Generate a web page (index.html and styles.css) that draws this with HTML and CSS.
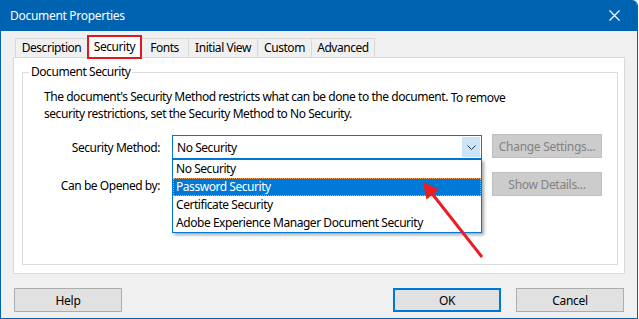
FILE: index.html
```html
<!DOCTYPE html>
<html lang="en">
<head>
	<meta charset="UTF-8">
	<meta name="viewport" content="width=device-width, initial-scale=1.0">
	<title>Document Properties</title>
	<link rel="stylesheet" href="styles.css">
</head>
<body>
	<div class="window">
		<div class="titlebar">
			<span class="title">Document Properties</span>
			<svg class="close" width="11" height="11" viewBox="0 0 11 11">
				<path d="M0.5 0.5 L10.5 10.5 M10.5 0.5 L0.5 10.5" stroke="#fff" stroke-width="1.2" fill="none"/>
			</svg>
		</div>

		<div class="dialog">
			<div class="tabs">
				<div class="tab tab-description">Description</div>
				<div class="tab tab-security selected">Security</div>
				<div class="tab tab-fonts">Fonts</div>
				<div class="tab tab-initial">Initial View</div>
				<div class="tab tab-custom">Custom</div>
				<div class="tab tab-advanced">Advanced</div>
			</div>

			<div class="panel">
				<fieldset class="group">
					<legend>Document Security</legend>
					<div class="group-body">
						<p class="intro">The document's Security Method restricts what can be done to the document. <span class="tail">To remove</span><br>security restrictions, set the Security Method to No Security.</p>

						<div class="form">
							<label class="field-label">Security Method:</label>
							<div class="combo">
								<span class="combo-value">No Security</span>
								<span class="combo-button">
									<svg width="9" height="5" viewBox="0 0 9 5">
										<path d="M0.5 0.5 L4.5 4.5 L8.5 0.5" stroke="#333" stroke-width="1" fill="none"/>
									</svg>
								</span>
								<!-- open drop-down list -->
								<ul class="combo-list">
									<li>No Security</li>
									<li class="active">Password Security</li>
									<li>Certificate Security</li>
									<li>Adobe Experience Manager Document Security</li>
								</ul>
							</div>
							<button class="side-button" disabled>Change Settings...</button>

							<label class="field-label">Can be Opened by:</label>
							<div></div>
							<button class="side-button" disabled>Show Details...</button>
						</div>
					</div>
				</fieldset>
			</div>

			<div class="footer">
				<button class="btn btn-help">Help</button>
				<div class="spacer"></div>
				<button class="btn btn-ok">OK</button>
				<button class="btn btn-cancel">Cancel</button>
			</div>
		</div>

		<!-- annotation arrow pointing at Password Security -->
		<svg class="annotation" width="638" height="319" viewBox="0 0 638 319">
			<line x1="482" y1="257" x2="430" y2="191" stroke="#ec1c24" stroke-width="3"/>
			<polygon points="423,182 426.5,199.5 439,189.5" fill="#ec1c24"/>
		</svg>
	</div>
</body>
</html>
```

FILE: styles.css
```css
* {
	box-sizing: border-box;
}

body {
	margin: 0;
	background: #fff;
	font-family: "Noto Sans", "Open Sans", sans-serif;
	font-size: 12px;
	letter-spacing: -0.45px;
	color: #000;
}

.window {
	position: relative;
	width: 638px;
	height: 319px;
	border: 1px solid #0063b1;
	border-top: none;
	border-radius: 0 6px 0 0;
	background: #f0f0f0;
	display: flex;
	flex-direction: column;
	overflow: hidden;
}

.titlebar {
	height: 31px;
	margin: 0 -1px;
	padding: 0 10px;
	background: #0063b1;
	color: #fff;
	display: flex;
	align-items: center;
	justify-content: space-between;
}

.title {
	letter-spacing: -0.3px;
}

.close {
	margin-right: 8px;
}

.dialog {
	flex: 1;
	padding: 4px 12px 0 12px;
	display: flex;
	flex-direction: column;
}

/* tabs */
.tabs {
	height: 22px;
	padding-left: 2px;
	display: flex;
	align-items: flex-end;
}

.tab {
	height: 19px;
	line-height: 17px;
	border: 1px solid #d9d9d9;
	border-bottom: none;
	margin-left: -1px;
	text-align: center;
	background: #f0f0f0;
}

.tab-description { width: 73px; margin-left: 0; }
.tab-fonts { width: 49px; }
.tab-initial { width: 70px; }
.tab-custom { width: 55px; }
.tab-advanced { width: 64px; }

.tab.selected {
	position: relative;
	z-index: 1;
	width: 55px;
	height: 24px;
	margin-bottom: -2px;
	margin-right: -1px;
	line-height: 19px;
	background: #fff;
	border: 2px solid #e5161c;
}

/* tab page */
.panel {
	height: 217px;
	background: #fff;
	border: 1px solid #d9d9d9;
	padding: 6px 6px 8px 8px;
	display: flex;
	flex-direction: column;
}

.group {
	flex: 1;
	margin: 0;
	padding: 0;
	border: 1px solid #dcdcdc;
	min-width: 0;
}

.group legend {
	margin-left: 6px;
	padding: 0 2px;
	line-height: 16px;
}

.group-body {
	padding: 9px 0 0 21px;
}

.intro {
	margin: 0 0 13px;
	line-height: 16px;
	white-space: nowrap;
}

.intro .tail {
	vertical-align: -1px;
}

.form {
	display: grid;
	grid-template-columns: 128px 310px 120px;
	grid-auto-rows: 24px;
	row-gap: 14px;
	align-items: center;
}

.field-label {
	text-align: right;
	padding-right: 12px;
}

/* combo box */
.combo {
	position: relative;
	height: 24px;
	border: 1px solid #0078d7;
	padding: 1px;
	display: flex;
	align-items: center;
	background: #fff;
}

.combo-value {
	flex: 1;
	padding-left: 3px;
}

.combo-button {
	width: 18px;
	height: 20px;
	background: #cce4f7;
	display: flex;
	align-items: center;
	justify-content: center;
}

.combo-list {
	position: absolute;
	top: 23px;
	left: -1px;
	width: 310px;
	margin: 0;
	padding: 0;
	list-style: none;
	background: #fff;
	border: 1px solid #0078d7;
	box-shadow: 2px 2px 3px rgba(0, 0, 0, 0.35);
	z-index: 2;
}

.combo-list li {
	height: 18px;
	line-height: 15px;
	padding-left: 2px;
	border: 1px dotted transparent;
}

.combo-list li.active {
	background: #0078d7;
	color: #fff;
	border-color: #f2a15a;
}

/* buttons */
button {
	font-family: inherit;
	font-size: 12px;
	letter-spacing: -0.3px;
	height: 24px;
	padding: 0;
	color: #000;
	background: #e1e1e1;
	border: 1px solid #adadad;
}

.side-button {
	width: 110px;
	margin-left: 10px;
	margin-top: -2px;
	background: #cccccc;
	border-color: #bfbfbf;
	color: #838383;
}

.footer {
	margin-top: 14px;
	display: flex;
}

.btn {
	width: 108px;
}

.btn-help {
	margin-left: 1px;
}

.spacer {
	flex: 1;
}

.btn-ok {
	margin-right: 15px;
	border: 2px solid #0078d7;
}

.btn-cancel {
	margin-right: 1px;
}

.annotation {
	position: absolute;
	left: -1px;
	top: 0;
	pointer-events: none;
	z-index: 3;
}
```
